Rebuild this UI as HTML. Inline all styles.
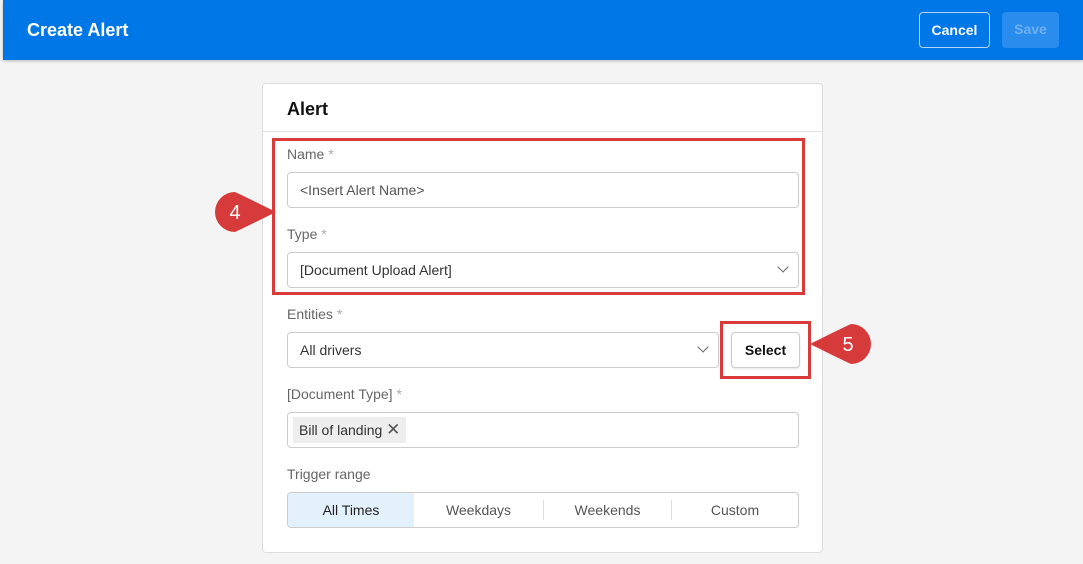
<!DOCTYPE html>
<html><head><style>
*{box-sizing:border-box;margin:0;padding:0}
body{width:1083px;height:564px;background:#f4f4f4;font-family:"Liberation Sans",sans-serif;position:relative;overflow:hidden}
.hdr{position:absolute;left:3px;top:0;width:1080px;height:60px;background:#0077e6;box-shadow:0 1px 3px rgba(0,0,0,.25)}
.hdr h1{position:absolute;left:24px;top:20px;font-size:18px;color:#fff;font-weight:bold}
.btn{position:absolute;top:12px;height:36px;border-radius:4px;font-size:14px;font-weight:bold;line-height:34px;text-align:center}
.card{position:absolute;left:262px;top:83px;width:561px;height:470px;background:#fff;border:1px solid #ddd;border-radius:4px}
.card .t{position:absolute;left:24px;top:15px;font-size:18px;font-weight:bold;color:#111}
.card .d{position:absolute;left:0;top:47px;width:100%;border-top:1px solid #e2e2e2}
.lbl{position:absolute;font-size:14px;color:#666}
.lbl i{font-style:normal;color:#aaa}
.in{position:absolute;height:36px;border:1px solid #ccc;border-radius:4px;background:#fff;font-size:14px;color:#333;line-height:34px;padding-left:12px}
.chev{position:absolute;right:11px;top:10px;width:8px;height:8px;border-right:1.3px solid #666;border-bottom:1.3px solid #666;transform:rotate(45deg)}
.red{position:absolute;border:3px solid #d93a3a}
</style></head><body>
<div class="hdr"><h1>Create Alert</h1>
<div class="btn" style="left:916px;width:71px;border:1px solid rgba(255,255,255,.7);color:#fff">Cancel</div>
<div class="btn" style="left:999px;width:57px;background:#2a8cec;color:#6fb0f0">Save</div>
</div>
<div class="card"><div class="t">Alert</div><div class="d"></div></div>

<div class="lbl" style="left:287px;top:146px">Name <i>*</i></div>
<div class="in" style="left:287px;top:172px;width:512px;color:#555">&lt;Insert Alert Name&gt;</div>
<div class="lbl" style="left:287px;top:226px">Type <i>*</i></div>
<div class="in" style="left:287px;top:252px;width:512px">[Document Upload Alert]<div class="chev"></div></div>
<div class="red" style="left:272px;top:138px;width:533px;height:157px"></div>

<div class="lbl" style="left:287px;top:306px">Entities <i>*</i></div>
<div class="in" style="left:287px;top:332px;width:432px">All drivers<div class="chev"></div></div>
<div class="in" style="left:731px;top:332px;width:69px;padding:0;text-align:center;font-weight:bold;color:#111;box-shadow:0 1px 2px rgba(0,0,0,.1)">Select</div>
<div class="red" style="left:720px;top:321px;width:91px;height:58px"></div>

<div class="lbl" style="left:287px;top:386px">[Document Type] <i>*</i></div>
<div class="in" style="left:287px;top:412px;width:512px;padding-left:5px"><span style="display:inline-block;background:#eee;height:26px;line-height:26px;margin-top:4px;padding:0 6px;vertical-align:top">Bill of landing <span style="font-size:17px;color:#555">✕</span></span></div>

<div class="lbl" style="left:287px;top:466px">Trigger range</div>
<div class="in" style="left:287px;top:492px;width:512px;padding:0;overflow:hidden;display:flex;color:#555">
<div style="width:126px;background:#e3f1fc;text-align:center;color:#222">All Times</div>
<div style="width:129px;text-align:center">Weekdays</div>
<div style="width:1px;background:#ddd;margin:7px 0"></div>
<div style="width:127px;text-align:center">Weekends</div>
<div style="width:1px;background:#ddd;margin:7px 0"></div>
<div style="flex:1;text-align:center">Custom</div>
</div>

<svg style="position:absolute;left:208px;top:190px" width="70" height="44"><path d="M27 2 A20 20 0 1 0 27 42 Q40 36 68 22 Q40 8 27 2Z" fill="#d63a3a"/><text x="27" y="29" fill="#fff" font-size="20" text-anchor="middle" font-family="Liberation Sans">4</text></svg>
<svg style="position:absolute;left:808px;top:322px" width="70" height="44"><path d="M43 2 A20 20 0 1 1 43 42 Q30 36 2 22 Q30 8 43 2Z" fill="#d63a3a"/><text x="40" y="29" fill="#fff" font-size="20" text-anchor="middle" font-family="Liberation Sans">5</text></svg>
</body></html>
